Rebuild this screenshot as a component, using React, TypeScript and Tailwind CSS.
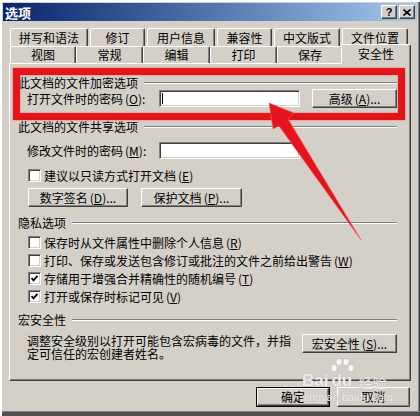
import React from "react";

const raised =
  "bg-[#d4d0c8] border border-t-white border-l-white border-r-[#404040] border-b-[#404040] shadow-[inset_-1px_-1px_0_#808080]";
const sunken =
  "bg-white border border-t-[#808080] border-l-[#808080] border-r-white border-b-white shadow-[inset_1px_1px_0_#404040,inset_-1px_-1px_0_#d4d0c8]";

const Key = ({ k }: { k: string }) => (
  <span className="ml-[2px]">
    (<u>{k}</u>)
  </span>
);

const Btn = ({ children, className = "" }: { children: React.ReactNode; className?: string }) => (
  <div className={`flex items-center justify-center leading-[12px] ${raised} ${className}`}>{children}</div>
);

const Checkbox = ({ checked }: { checked?: boolean }) => (
  <span className={`w-[13px] h-[13px] shrink-0 flex items-center justify-center ${sunken}`}>
    {checked && (
      <svg width="9" height="9" viewBox="0 0 9 9">
        <polyline points="1.5,4 3.5,6.3 7.5,1.8" fill="none" stroke="#000" strokeWidth="1.8" />
      </svg>
    )}
  </span>
);

const GroupHeader = ({ title, className = "" }: { title: string; className?: string }) => (
  <div className={`flex items-center h-[12px] ${className}`}>
    <span className="leading-[12px]">{title}</span>
    <div className="flex-1 ml-[6px] h-[2px] border-t border-t-[#808080] border-b border-b-white" />
  </div>
);

const CheckRow = ({ label, k, checked, className = "" }: { label: string; k: string; checked?: boolean; className?: string }) => (
  <div className={`flex items-center h-[13px] ml-[10px] ${className}`}>
    <Checkbox checked={checked} />
    <span className="ml-[3px] leading-[12px]">
      {label}
      <Key k={k} />
    </span>
  </div>
);

const backTabs: [string, number][] = [
  ["拼写和语法", 78],
  ["修订", 55],
  ["用户信息", 68],
  ["兼容性", 55],
  ["中文版式", 66],
  ["文件位置", 66],
];

const frontTabs: [string, number][] = [
  ["视图", 66],
  ["常规", 67],
  ["编辑", 67],
  ["打印", 67],
  ["保存", 66],
];

export default function App() {
  return (
    <div className="relative w-[420px] h-[416px] overflow-hidden bg-[#d4d0c8] pt-[3px] px-[3px] text-[12px] text-black font-['Noto_Sans_CJK_SC',sans-serif] shadow-[inset_2px_2px_0_#ffffff,inset_0_-4px_0_#505050,inset_0_-5px_0_#808080,inset_-1px_0_0_#404040,inset_-2px_0_0_#808080]">
      {/* title bar */}
      <div className="h-[18px] flex items-center bg-linear-to-r from-[#0a246a] to-[#a6caf0] pl-[2px] pr-[2px]">
        <span className="text-white font-bold text-[13px] leading-[13px]">选项</span>
        <div className="ml-auto flex gap-[2px]">
          <div className={`w-[16px] h-[14px] flex items-center justify-center text-[11px] font-bold leading-none font-['Liberation_Sans',sans-serif] ${raised}`}>
            ?
          </div>
          <div className={`w-[16px] h-[14px] flex items-center justify-center ${raised}`}>
            <svg width="8" height="7" viewBox="0 0 8 7">
              <path d="M0.5 0.5 L7.5 6.5 M7.5 0.5 L0.5 6.5" stroke="#000" strokeWidth="1.6" />
            </svg>
          </div>
        </div>
      </div>

      {/* tabs */}
      <div className="mt-[7px] pl-[7px] flex gap-[2px] h-[18px]">
        {backTabs.map(([t, w]) => (
          <div
            key={t}
            style={{ width: w }}
            className="h-[18px] flex items-center justify-center rounded-t-[2px] border-l border-t border-white border-r border-r-[#404040] shadow-[inset_-1px_0_0_#808080] leading-[12px]"
          >
            {t}
          </div>
        ))}
      </div>
      <div className="pl-[7px] flex h-[17px]">
        {frontTabs.map(([t, w]) => (
          <div
            key={t}
            style={{ width: w }}
            className="h-[17px] flex items-center justify-center rounded-t-[2px] border-l border-t border-white border-r border-r-[#404040] shadow-[inset_-1px_0_0_#808080] leading-[12px]"
          >
            {t}
          </div>
        ))}
        <div className="relative z-10 -ml-[2px] -mt-[2px] w-[70px] h-[20px] bg-[#d4d0c8] flex items-center justify-center rounded-t-[2px] border-l border-t border-white border-r border-r-[#404040] shadow-[inset_-1px_0_0_#808080] leading-[12px] pb-[2px]">
          安全性
        </div>
      </div>

      {/* panel */}
      <div className="ml-[6px] w-[402px] h-[318px] flex flex-col pl-[8px] pr-[13px] border-l border-t border-white border-r border-b border-r-[#404040] border-b-[#404040] shadow-[inset_-1px_-1px_0_#808080]">
        <GroupHeader title="此文档的文件加密选项" className="mt-[13px]" />
        <div className="flex items-center h-[19px]">
          <span className="w-[132px] ml-[9px] leading-[12px]">
            打开文件时的密码<Key k="O" />:
          </span>
          <div className={`relative w-[141px] h-[17px] ${sunken}`}>
            <div className="absolute left-[2px] top-[2px] w-[1px] h-[11px] bg-black" />
          </div>
          <Btn className="ml-auto w-[85px] h-[19px]">
            高级<Key k="A" />...
          </Btn>
        </div>

        <GroupHeader title="此文档的文件共享选项" className="mt-[13px]" />
        <div className="flex items-center h-[17px] mt-[9px]">
          <span className="w-[132px] ml-[9px] leading-[12px]">
            修改文件时的密码<Key k="M" />:
          </span>
          <div className={`w-[141px] h-[17px] ${sunken}`} />
        </div>
        <CheckRow label="建议以只读方式打开文档" k="E" className="mt-[10px]" />
        <div className="flex ml-[10px] mt-[6px] gap-[13px]">
          <Btn className="w-[100px] h-[19px]">
            数字签名<Key k="D" />...
          </Btn>
          <Btn className="w-[101px] h-[19px]">
            保护文档<Key k="P" />...
          </Btn>
        </div>

        <GroupHeader title="隐私选项" className="mt-[10px]" />
        <CheckRow label="保存时从文件属性中删除个人信息" k="R" className="mt-[7px]" />
        <CheckRow label="打印、保存或发送包含修订或批注的文件之前给出警告" k="W" className="mt-[5px]" />
        <CheckRow label="存储用于增强合并精确性的随机编号" k="T" checked className="mt-[5px]" />
        <CheckRow label="打开或保存时标记可见" k="V" checked className="mt-[5px]" />

        <GroupHeader title="宏安全性" className="mt-[11px]" />
        <div className="flex items-start mt-[8px]">
          <div className="ml-[9px] leading-[13px]">
            <div>调整安全级别以打开可能包含宏病毒的文件，并指</div>
            <div>定可信任的宏创建者姓名。</div>
          </div>
          <Btn className="ml-auto w-[95px] h-[19px]">
            宏安全性<Key k="S" />...
          </Btn>
        </div>
      </div>

      {/* dialog buttons */}
      <div className="flex justify-end gap-[7px] mr-[7px] mt-[6px]">
        <div className="w-[74px] h-[20px] border border-black">
          <Btn className="w-full h-full">确定</Btn>
        </div>
        <Btn className="w-[73px] h-[20px]">取消</Btn>
      </div>

      {/* annotation: red box */}
      <div className="absolute left-[13px] top-[68px] w-[392px] h-[52px] border-[7px] border-[#e3141c] shadow-[0_0_2px_#ff6060,inset_0_0_2px_#ff6060]" />

      {/* annotation: arrow */}
      <svg className="absolute left-0 top-0 pointer-events-none" width="420" height="416" viewBox="0 0 420 416">
        <polygon
          points="269,103 294,113 288,119 361,240 279,126 273,129"
          fill="#e3141c"
          stroke="#ff5a5a"
          strokeWidth="0.6"
          strokeLinejoin="round"
        />
      </svg>

      {/* watermark */}
      <div className="absolute left-[302px] top-[358px] pointer-events-none text-white/80 font-['Liberation_Sans',sans-serif] [text-shadow:0_0_1px_#9a9a9a]">
        <div className="flex items-end h-[31px]">
          <span className="text-[17px] font-bold leading-[17px]">Bai</span>
          <div className="relative w-[27px] h-[31px] ml-[1px]">
            <svg className="absolute left-0 top-0" width="27" height="16" viewBox="0 0 27 16">
              <ellipse cx="5" cy="10" rx="3" ry="3.5" fill="rgba(255,255,255,0.8)" stroke="#aaa" strokeWidth="0.4" />
              <ellipse cx="10" cy="4" rx="3" ry="3.5" fill="rgba(255,255,255,0.8)" stroke="#aaa" strokeWidth="0.4" />
              <ellipse cx="17" cy="4" rx="3" ry="3.5" fill="rgba(255,255,255,0.8)" stroke="#aaa" strokeWidth="0.4" />
              <ellipse cx="22" cy="10" rx="3" ry="3.5" fill="rgba(255,255,255,0.8)" stroke="#aaa" strokeWidth="0.4" />
            </svg>
            <span className="absolute left-[2px] bottom-0 text-[17px] font-bold leading-[17px]">du</span>
          </div>
          <span className="ml-[2px] text-[14px] leading-[14px] font-['Noto_Sans_CJK_SC',sans-serif]">经验</span>
        </div>
        <div className="text-[11px] leading-[12px] mt-[2px] ml-[2px]">jingyan.baidu.com</div>
      </div>
    </div>
  );
}
